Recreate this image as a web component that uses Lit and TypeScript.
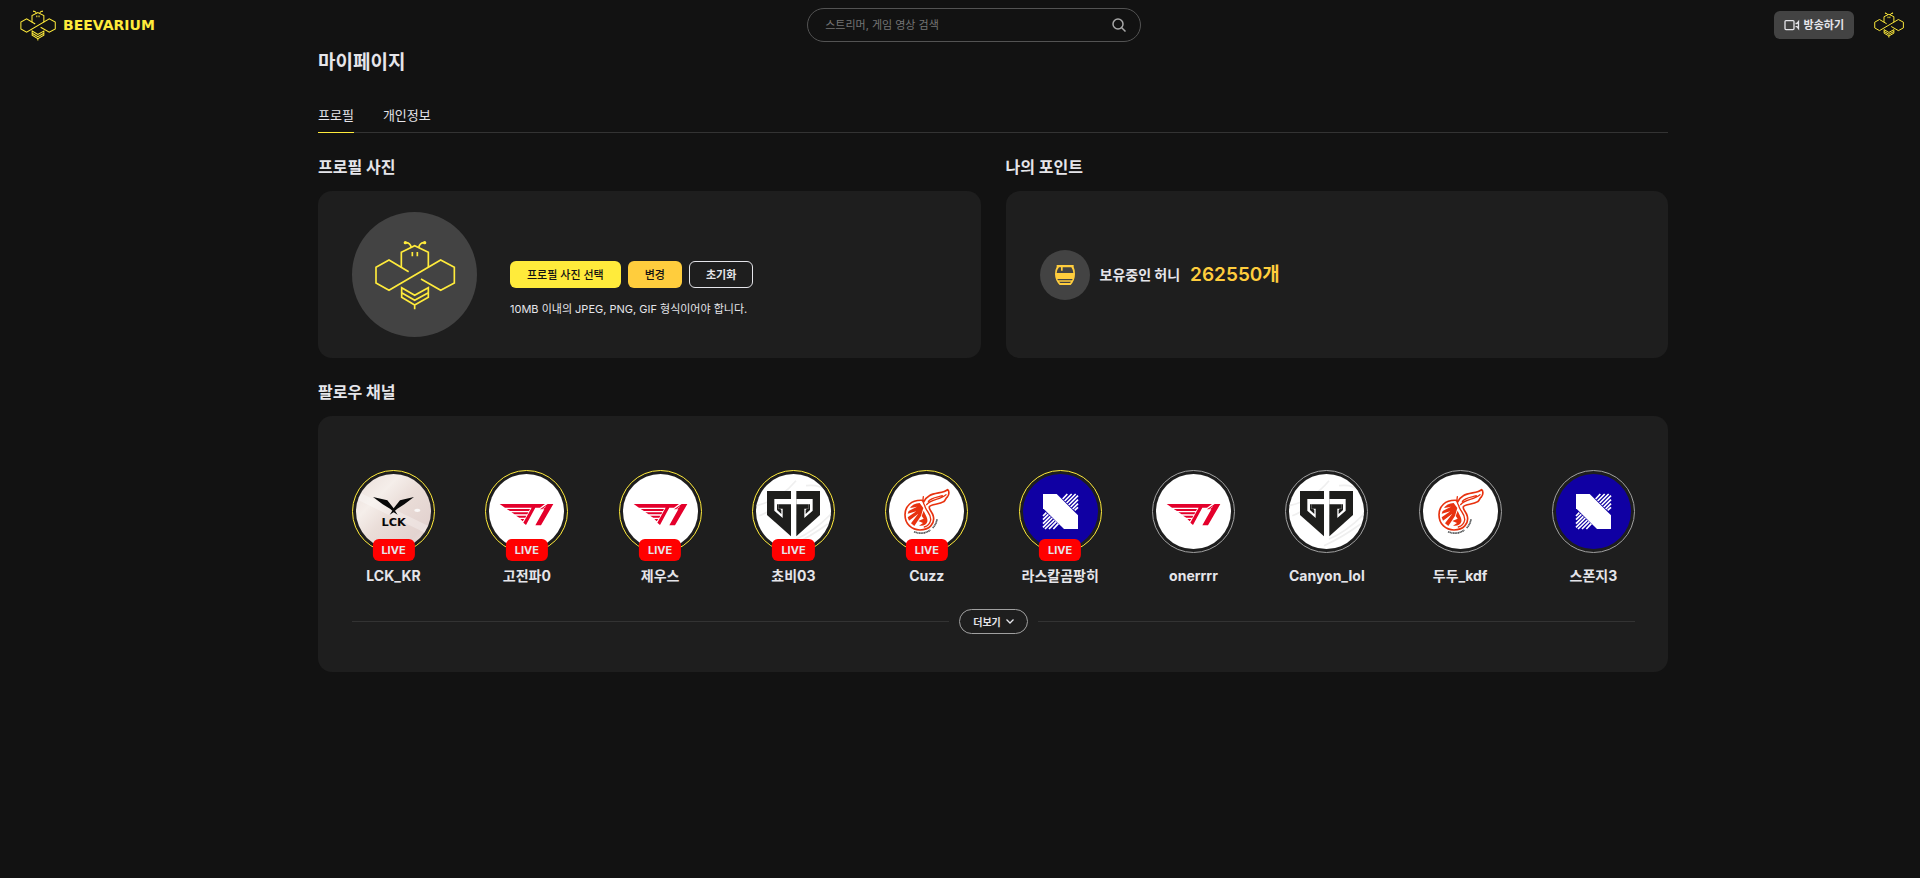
import { LitElement, html, svg, css, TemplateResult } from "lit";
import { customElement, property } from "lit/decorators.js";
import { classMap } from "lit/directives/class-map.js";

type Team = "lck" | "t1" | "gen" | "kdf" | "drx";

interface Channel {
  name: string;
  team: Team;
  live: boolean;
}

const channels: Channel[] = [
  { name: "LCK_KR", team: "lck", live: true },
  { name: "고전파0", team: "t1", live: true },
  { name: "제우스", team: "t1", live: true },
  { name: "쵸비03", team: "gen", live: true },
  { name: "Cuzz", team: "kdf", live: true },
  { name: "라스칼곰팡히", team: "drx", live: true },
  { name: "onerrrr", team: "t1", live: false },
  { name: "Canyon_lol", team: "gen", live: false },
  { name: "두두_kdf", team: "kdf", live: false },
  { name: "스폰지3", team: "drx", live: false },
];

@customElement("bee-mark")
export class BeeMark extends LitElement {
  @property({ type: Number }) stroke = 4;

  static styles = css`
    :host { display: block; }
    svg { display: block; width: 100%; height: 100%; fill: none; stroke: #ffeb3b; }
    .dot { fill: #ffeb3b; stroke: none; }
  `;

  render() {
    return html`<svg viewBox="190 268 246 210" stroke-width=${this.stroke} aria-hidden="true">
      <path d="M272 350V305L312 285L353 305V350" />
      <path d="M294 363L235 328L196 350V397L235 419L390 328L431 350V397L390 419L331 385" />
      <path d="M285 276Q299 276 302 291M341 276Q327 276 324 291" />
      <path d="M305 304V317M320 304V317" />
      <path d="M273 411L312 434L353 411V440L312 463L273 440ZM273 426L312 449L353 426M312 462V476" />
      <circle class="dot" cx="284" cy="276" r="5" />
      <circle class="dot" cx="342" cy="276" r="5" />
    </svg>`;
  }
}

const logos: Record<Team, TemplateResult> = {
  lck: svg`
    <defs>
      <linearGradient id="sheen" x1="0" y1="0" x2="1" y2="1">
        <stop offset="0" stop-color="#e9ddd8" />
        <stop offset=".3" stop-color="#f5eeea" />
        <stop offset=".5" stop-color="#eaddd8" />
        <stop offset=".8" stop-color="#e3d3d0" />
        <stop offset="1" stop-color="#efe5e3" />
      </linearGradient>
    </defs>
    <rect width="225" height="225" fill="url(#sheen)" />
    <path d="M0 50L225 160V185L0 75Z" fill="#fff" opacity=".3" />
    <ellipse cx="184" cy="109" rx="9" ry="5" fill="#fff" opacity=".8" />
    <path d="M51 69L94 79L113 103L132 79L174 69L145 91L124 104L117 110L125 122L113 115L101 122L109 110L102 104L80 91Z" fill="#080808" />
    <text x="113" y="156" text-anchor="middle" font-family="DejaVu Sans, sans-serif" font-weight="700" font-size="34" fill="#080808">LCK</text>`,
  t1: svg`
    <rect width="225" height="225" fill="#fff" />
    <g fill="#e4002b">
      <path d="M32 90H168L153 101H139L111 153L103 146L128 101H48Z" />
      <path d="M193 90L156 154H139L166 106H153L176 90Z" />
      <path d="M53 105H123L120 111H63ZM67 115H118L115 121H77ZM81 125H112L109 131H91ZM94 135H106L101 142Z" />
    </g>
    <path d="M170 98L133 128" stroke="#fff" stroke-width="2" />`,
  gen: svg`
    <rect width="225" height="225" fill="#fff" />
    <path d="M0 95Q70 80 120 20M10 125Q50 110 60 90M120 195Q170 175 225 120M105 215Q160 190 215 150M150 35Q190 30 210 50" fill="none" stroke="#efefef" stroke-width="5" />
    <path d="M33 51H105V187L33 123Z" fill="#1e1e1c" />
    <path d="M192 51H121V187L192 123Z" fill="#1e1e1c" />
    <path d="M55 75H105V91H67V104H80V132L55 110Z" fill="#fff" />
    <path d="M170 75H121V91H158V104H145V132L170 110Z" fill="#fff" />
    <path d="M63 91H67V104H72L76 108V120L63 108ZM162 91H158V104H153L149 108V120L162 108Z" fill="#1e1e1c" />`,
  kdf: svg`
    <rect width="225" height="225" fill="#fff" />
    <path d="M100 79C66 77 48 98 48 122C48 151 69 168 93 168C121 168 138 149 133 127C130 113 119 108 121 98C127 90 150 92 164 83C171 79 168 74 175 69C181 62 181 51 176 47C164 58 138 55 121 65C112 70 107 77 104 84Z" fill="none" stroke="#e8320f" stroke-width="5" stroke-linejoin="round" />
    <g fill="none" stroke="#e8320f" stroke-width="4" stroke-linecap="round">
      <path d="M103 68C101 78 102 88 108 96M113 92C124 75 152 78 171 62M118 82C128 70 145 70 160 65" />
      <path d="M108 98C112 112 127 120 125 138C123 150 116 156 106 159" />
    </g>
    <path d="M92 87C78 88 68 94 62 102L84 98L59 111L56 119L82 112L56 130L60 140L88 119L66 148L76 156L96 126L103 102Z" fill="#e8320f" />
    <path d="M104 110C110 124 117 133 115 143C112 152 103 157 90 155L102 147L88 141L104 134L98 126Z" fill="#e8320f" />
    <path d="M75 173Q102 184 124 168M131 162Q142 151 144 135" fill="none" stroke="#56595b" stroke-width="5" stroke-dasharray="4 1" />`,
  drx: svg`
    <rect width="225" height="225" fill="#1000a3" />
    <path d="M60 60H101L165 124V165H123L60 103Z" fill="#fff" />
    <path d="M119 75L133 60M125 81L146 60M131 87L158 60M137 93L165 65M143 99L165 77M149 105L165 89M155 109L165 100M60 137L76 121M60 126L70 116M60 149L82 127M60 160L88 132M66 165L94 138M78 165L100 143M91 165L106 149" stroke="#fff" stroke-width="5" />`,
};

@customElement("channel-item")
export class ChannelItem extends LitElement {
  @property({ attribute: false }) channel!: Channel;

  static styles = css`
    :host { display: block; width: 83px; }
    .link { display: flex; flex-direction: column; align-items: center; color: #e5e5ea; text-decoration: none; }
    .ring { position: relative; box-sizing: border-box; width: 83px; height: 83px; padding: 3px; border: 1px solid #a0a0a0; border-radius: 50%; }
    .ring.live { border-color: #ffeb3b; }
    .logo { display: block; width: 75px; height: 75px; border-radius: 50%; }
    .badge { position: absolute; left: 50%; bottom: -9px; transform: translateX(-50%); padding: 0 9px; border-radius: 6px; background: #f00; font-size: 11px; line-height: 22px; font-weight: 700; }
    .name { margin-top: 12px; font-size: 14px; line-height: 22px; font-weight: 700; white-space: nowrap; }
  `;

  render() {
    const { name, team, live } = this.channel;
    return html`<a class="link" href="#">
      <div class=${classMap({ ring: true, live })}>
        <svg class="logo" viewBox="0 0 225 225" aria-hidden="true">${logos[team]}</svg>
        ${live ? html`<span class="badge">LIVE</span>` : null}
      </div>
      <span class="name">${name}</span>
    </a>`;
  }
}

@customElement("app-root")
export class AppRoot extends LitElement {
  static styles = css`
    :host {
      display: block;
      min-height: 100vh;
      background: #121212;
      color: #e5e5ea;
      font-family: Inter, "Noto Sans CJK KR", sans-serif;
      font-size: 13px;
      line-height: 20px;
    }
    * { box-sizing: border-box; }
    h1, h2, p { margin: 0; }
    button, input { font: inherit; color: inherit; }
    button { cursor: pointer; border: 0; padding: 0; }
    a { color: inherit; text-decoration: none; }

    .header { display: flex; align-items: center; height: 50px; padding: 0 16px 0 20px; }
    .brand { display: flex; align-items: center; gap: 7px; }
    .brand-bee { width: 36px; height: 31px; }
    .brand-name { color: #ffeb3b; font-family: "DejaVu Sans", sans-serif; font-size: 14px; font-weight: 700; }
    .search-area { flex: 1; display: flex; justify-content: center; padding-left: 20px; }
    .search { display: flex; align-items: center; width: 334px; height: 34px; padding: 0 14px 0 17px; border: 1px solid #535353; border-radius: 17px; }
    .search-input { flex: 1; min-width: 0; padding: 0; border: 0; outline: 0; background: none; font-size: 11px; }
    .search-input::placeholder { color: #757575; opacity: 1; }
    .search-button { width: 14px; height: 14px; background: none; }
    .icon { display: block; width: 100%; height: 100%; fill: none; stroke: currentColor; }
    .search-button .icon { color: #a8a8a8; }
    .actions { display: flex; align-items: center; gap: 20px; }
    .broadcast { display: flex; align-items: center; gap: 4px; height: 28px; padding: 0 10px; border-radius: 6px; background: #434343; font-size: 11px; font-weight: 700; }
    .camera { width: 16px; height: 12px; }
    .my-bee { display: block; width: 30px; height: 26px; }

    .main { padding: 1px 0 0 66px; }
    .content { max-width: 1350px; margin: 0 auto; }
    .title { font-size: 19px; line-height: 24px; font-weight: 700; }
    .tabs { display: flex; gap: 29px; margin-top: 30px; border-bottom: 1px solid #333; }
    .tab { height: 28px; margin-bottom: -1px; padding-bottom: 8px; font-size: 13px; }
    .tab.active { border-bottom: 1px solid #ffeb3b; }
    .panels { display: grid; grid-template-columns: 1fr 1fr; gap: 25px; }
    .section { display: flex; flex-direction: column; margin-top: 22px; }
    .section-title { font-size: 16px; line-height: 24px; font-weight: 700; }
    .card { flex: 1; margin-top: 12px; padding: 21px 33px 21px 34px; border-radius: 14px; background: #1e1e1e; }

    .profile { display: flex; gap: 33px; }
    .avatar { display: grid; place-items: center; width: 125px; height: 125px; border-radius: 50%; background: #434343; }
    .avatar-bee { width: 82px; height: 70px; }
    .upload { padding-top: 49px; }
    .upload-buttons { display: flex; gap: 7px; }
    .pill { height: 27px; padding: 0 17px; border-radius: 6px; font-size: 11px; }
    .pick { background: #ffeb3b; color: #121212; font-weight: 500; }
    .change { background: #ffcd3d; color: #121212; font-weight: 500; }
    .reset { padding: 0 16px; border: 1px solid #e5e5ea; background: none; font-weight: 700; }
    .hint { margin-top: 11px; font-size: 11px; }

    .points { display: flex; align-items: center; gap: 10px; }
    .coin { display: grid; place-items: center; width: 50px; height: 50px; border-radius: 50%; background: #434343; }
    .pot { display: block; width: 20px; height: 20px; }
    .points-label { font-size: 14px; font-weight: 700; }
    .points-value { color: #ffcd3d; font-size: 19px; font-weight: 600; }

    .follow-card { padding-top: 54px; padding-bottom: 38px; }
    .channels { display: flex; justify-content: space-between; margin: 0; padding: 0; list-style: none; }
    .more-row { display: flex; align-items: center; gap: 10px; margin-top: 22px; }
    .line { flex: 1; height: 1px; background: #333; }
    .more { display: flex; align-items: center; justify-content: center; gap: 5px; height: 25px; padding: 0 13px; border: 1px solid #a0a0a0; border-radius: 13px; background: none; font-size: 10px; font-weight: 700; }
    .chevron { width: 8px; height: 5px; }
  `;

  render() {
    return html`
      <header class="header">
        <a class="brand" href="#">
          <bee-mark class="brand-bee" .stroke=${7}></bee-mark>
          <span class="brand-name">BEEVARIUM</span>
        </a>
        <div class="search-area">
          <form class="search" role="search">
            <input class="search-input" type="text" aria-label="검색" placeholder="스트리머, 게임 영상 검색" />
            <button class="search-button" type="button" aria-label="검색">
              <svg class="icon" viewBox="0 0 14 14" stroke-width="1.5"><circle cx="6" cy="6" r="5" /><path d="M9.5 9.5L13.5 13.5" /></svg>
            </button>
          </form>
        </div>
        <div class="actions">
          <button class="broadcast">
            <svg class="icon camera" viewBox="0 0 16 12" stroke-width="1.3"><rect x="1" y="1.6" width="9" height="9" rx="1" /><path d="M11.5 4.5H13L14.5 2.6V9.6L13 7.7H11.5" /></svg>
            방송하기
          </button>
          <a href="#" aria-label="마이페이지"><bee-mark class="my-bee" .stroke=${8}></bee-mark></a>
        </div>
      </header>
      <main class="main">
        <div class="content">
          <h1 class="title">마이페이지</h1>
          <nav class="tabs">
            <a class="tab active" href="#">프로필</a>
            <a class="tab" href="#">개인정보</a>
          </nav>
          <div class="panels">
            <section class="section">
              <h2 class="section-title">프로필 사진</h2>
              <div class="card profile">
                <div class="avatar"><bee-mark class="avatar-bee" .stroke=${5}></bee-mark></div>
                <div class="upload">
                  <div class="upload-buttons">
                    <button class="pill pick">프로필 사진 선택</button>
                    <button class="pill change">변경</button>
                    <button class="pill reset">초기화</button>
                  </div>
                  <p class="hint">10MB 이내의 JPEG, PNG, GIF 형식이어야 합니다.</p>
                </div>
              </div>
            </section>
            <section class="section">
              <h2 class="section-title">나의 포인트</h2>
              <div class="card points">
                <div class="coin">
                  <svg class="pot" viewBox="0 0 60 60" aria-hidden="true">
                    <path d="M5 0H56V6Q60 14 60 27Q60 46 47 60H14Q0 46 0 27Q0 14 5 6Z" fill="#ffcd3d" />
                    <path d="M12 7H18V17H23V7H49Q54 14 55 24H5Q6 14 12 7Z" fill="#434343" />
                    <path d="M7 42H53L51 46H9ZM12 50H48L45 54H16Z" fill="#434343" />
                  </svg>
                </div>
                <span class="points-label">보유중인 허니</span>
                <span class="points-value">262550개</span>
              </div>
            </section>
          </div>
          <section class="section">
            <h2 class="section-title">팔로우 채널</h2>
            <div class="card follow-card">
              <ul class="channels">
                ${channels.map((c) => html`<li><channel-item .channel=${c}></channel-item></li>`)}
              </ul>
              <div class="more-row">
                <span class="line"></span>
                <button class="more">
                  더보기
                  <svg class="icon chevron" viewBox="0 0 8 5" stroke-width="1.3"><path d="M.5 .5L4 4L7.5 .5" /></svg>
                </button>
                <span class="line"></span>
              </div>
            </div>
          </section>
        </div>
      </main>
    `;
  }
}
